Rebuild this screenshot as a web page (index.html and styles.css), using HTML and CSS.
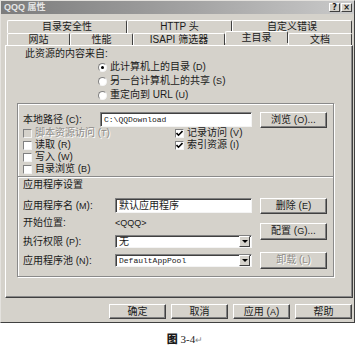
FILE: index.html
```
<!DOCTYPE html>
<html lang="zh-CN">
<head>
    <meta charset="UTF-8">
    <title>QQQ 属性</title>
    <link rel="stylesheet" href="styles.css">
</head>
<body>
    <div class="dialog">
        <div class="titlebar">
            <span class="title">QQQ 属性</span>
            <span class="title-buttons">
                <span class="tbtn">?</span>
                <span class="tbtn">×</span>
            </span>
        </div>

        <div class="tabs">
            <div class="tab-row">
                <div class="tab w120">目录安全性</div>
                <div class="tab w105">HTTP 头</div>
                <div class="tab w120">自定义错误</div>
            </div>
            <div class="tab-row">
                <div class="tab w63">网站</div>
                <div class="tab w63">性能</div>
                <div class="tab w92">ISAPI 筛选器</div>
                <div class="tab w63 active">主目录</div>
                <div class="tab w64">文档</div>
            </div>
        </div>

        <div class="panel">
            <div class="source-label">此资源的内容来自:</div>
            <div class="radio-list">
                <div class="radio-item"><span class="radio checked"></span><span>此计算机上的目录 (<u>D</u>)</span></div>
                <div class="radio-item"><span class="radio"></span><span>另一台计算机上的共享 (<u>S</u>)</span></div>
                <div class="radio-item"><span class="radio"></span><span>重定向到 URL (<u>U</u>)</span></div>
            </div>

            <div class="box">
                <div class="path-row">
                    <span class="path-label">本地路径 (<u>C</u>):</span>
                    <span class="field mono">C:\QQDownload</span>
                    <span class="btn">浏览 (<u>O</u>)...</span>
                </div>

                <div class="access">
                    <div class="access-col left">
                        <div class="check-item disabled"><span class="check"></span><span>脚本资源访问 (<u>T</u>)</span></div>
                        <div class="check-item"><span class="check"></span><span>读取 (<u>R</u>)</span></div>
                        <div class="check-item"><span class="check"></span><span>写入 (<u>W</u>)</span></div>
                        <div class="check-item"><span class="check"></span><span>目录浏览 (<u>B</u>)</span></div>
                    </div>
                    <div class="access-col">
                        <div class="check-item"><span class="check"><svg width="7" height="7" viewBox="0 0 7 7"><polyline points="0.5,3 2.5,5.2 6.5,1" fill="none" stroke="#000" stroke-width="1.6"/></svg></span><span>记录访问 (<u>V</u>)</span></div>
                        <div class="check-item"><span class="check"><svg width="7" height="7" viewBox="0 0 7 7"><polyline points="0.5,3 2.5,5.2 6.5,1" fill="none" stroke="#000" stroke-width="1.6"/></svg></span><span>索引资源 (<u>I</u>)</span></div>
                    </div>
                </div>

                <div class="divider"></div>
                <div class="section-label">应用程序设置</div>

                <div class="app-grid">
                    <span class="app-label">应用程序名 (<u>M</u>):</span>
                    <span class="field">默认应用程序</span>
                    <span class="btn">删除 (<u>E</u>)</span>

                    <span class="app-label">开始位置:</span>
                    <span class="plain">&lt;QQQ&gt;</span>
                    <span class="btn config">配置 (<u>G</u>)...</span>

                    <span class="app-label">执行权限 (<u>P</u>):</span>
                    <span class="field select">无<span class="drop"></span></span>

                    <span class="app-label">应用程序池 (<u>N</u>):</span>
                    <span class="field select mono">DefaultAppPool<span class="drop"></span></span>
                    <span class="btn disabled">卸载 (<u>L</u>)</span>
                </div>
            </div>
        </div>

        <div class="actions">
            <span class="btn wide">确定</span>
            <span class="btn wide">取消</span>
            <span class="btn wide">应用 (<u>A</u>)</span>
            <span class="btn wide">帮助</span>
        </div>
    </div>

    <div class="caption"><b>图</b> 3-4<span class="ret">↵</span></div>
</body>
</html>
```

FILE: styles.css
```
body {
    margin: 0;
    background-color: #fff;
    font-family: "Liberation Sans", "Noto Sans CJK SC", sans-serif;
    font-size: 10px;
    line-height: 12px;
    color: #1a1a1a;
}
u {
    text-decoration: none;
    font-size: 9px;
}
.dialog {
    width: 355px;
    height: 323px;
    box-sizing: border-box;
    background-color: #d5d2cb;
    border: 1px solid;
    border-color: #e4e2de #404040 #404040 #e4e2de;
}
.titlebar {
    height: 13px;
    display: flex;
    justify-content: space-between;
    align-items: center;
    background: linear-gradient(to right, #7c7c7c, #a4a4a4 55%, #cacaca);
    padding: 0 2px 0 3px;
}
.title {
    color: #e6e6e6;
    font-weight: bold;
    font-size: 9px;
    line-height: 13px;
}
.title-buttons {
    display: flex;
    gap: 1px;
}
.tbtn {
    width: 11px;
    height: 9px;
    box-sizing: border-box;
    background-color: #d5d2cb;
    border: 1px solid;
    border-color: #fff #404040 #404040 #fff;
    font-family: "DejaVu Sans", sans-serif;
    font-size: 8px;
    font-weight: bold;
    line-height: 7px;
    text-align: center;
}

/* вкладки */
.tabs {
    padding: 6px 0 0 6px;
}
.tab-row {
    display: flex;
}
.tab {
    height: 13px;
    box-sizing: border-box;
    border-top: 1px solid #fff;
    border-left: 1px solid #fff;
    border-right: 1px solid #404040;
    border-radius: 2px 2px 0 0;
    text-align: center;
    line-height: 12px;
}
.tab-row + .tab-row .tab {
    height: 12px;
    line-height: 11px;
}
.tab.active {
    position: relative;
    z-index: 1;
    height: 14px;
    margin-top: -2px;
    margin-bottom: -1px;
    background-color: #d5d2cb;
}
.w120 { width: 120px; }
.w105 { width: 105px; }
.w63 { width: 63px; }
.w64 { width: 64px; }
.w92 { width: 92px; }

/* основная панель */
.panel {
    margin-left: 4px;
    width: 348px;
    height: 253px;
    box-sizing: border-box;
    border: 1px solid;
    border-color: #fff #404040 #404040 #fff;
    box-shadow: inset -1px -1px #8a8a8a;
}
.source-label {
    margin: 1px 0 0 19px;
    height: 13px;
    line-height: 13px;
}
.radio-list {
    margin-left: 92px;
}
.radio-item {
    height: 14px;
    display: flex;
    align-items: center;
    gap: 3px;
}
.radio {
    width: 9px;
    height: 9px;
    box-sizing: border-box;
    border-radius: 50%;
    background-color: #fff;
    border: 1px solid;
    border-color: #808080 #f4f4f4 #f4f4f4 #808080;
    display: flex;
    align-items: center;
    justify-content: center;
}
.radio.checked::after {
    content: "";
    width: 3px;
    height: 3px;
    border-radius: 50%;
    background-color: #000;
}

.box {
    margin: 1px 0 0 11px;
    width: 317px;
    height: 174px;
    box-sizing: border-box;
    border: 1px solid #8a8a8a;
    box-shadow: 1px 1px #fff, inset 1px 1px #fff;
    padding: 8px 6px 0 5px;
}
.path-row {
    display: flex;
    align-items: center;
    height: 15px;
}
.path-label {
    width: 77px;
}
.path-row .field {
    width: 152px;
    height: 15px;
}
.path-row .btn {
    margin-left: 8px;
}
.field {
    height: 15px;
    box-sizing: border-box;
    background-color: #fff;
    border: 1px solid;
    border-color: #808080 #f4f4f4 #f4f4f4 #808080;
    box-shadow: inset 1px 1px #404040;
    padding-left: 3px;
    line-height: 13px;
    display: flex;
    align-items: center;
    position: relative;
}
.mono {
    font-family: "Liberation Mono", monospace;
    font-size: 8px;
}
.btn {
    width: 67px;
    height: 16px;
    box-sizing: border-box;
    border: 1px solid;
    border-color: #fff #404040 #404040 #fff;
    box-shadow: inset -1px -1px #808080;
    background-color: #d5d2cb;
    text-align: center;
    line-height: 14px;
}
.btn.disabled, .check-item.disabled {
    color: #8e8c88;
    text-shadow: 1px 1px #fff;
}

.access {
    display: flex;
}
.access-col.left {
    width: 152px;
}
.check-item {
    height: 12px;
    display: flex;
    align-items: center;
    gap: 3px;
}
.check {
    width: 9px;
    height: 9px;
    box-sizing: border-box;
    background-color: #fff;
    border: 1px solid;
    border-color: #808080 #f4f4f4 #f4f4f4 #808080;
    display: flex;
    align-items: center;
    justify-content: center;
}
.disabled .check {
    background-color: #d5d2cb;
}
.divider {
    margin: 1px -6px 0 -5px;
    border-top: 1px solid #8a8a8a;
    border-bottom: 1px solid #fff;
}
.section-label {
    height: 14px;
    line-height: 14px;
}
.app-grid {
    margin-top: 6px;
    display: grid;
    grid-template-columns: 92px 137px 67px;
    grid-template-rows: 15px 20px 17px 21px;
    column-gap: 0;
    align-items: center;
}
.app-grid .btn {
    margin-left: 8px;
    width: 67px;
}
.app-grid .btn.config {
    grid-column: 3;
    grid-row: 2 / 4;
    align-self: start;
    margin-top: 10px;
    height: 17px;
}
.app-grid .field {
    width: 137px;
}
.app-grid .select {
    height: 13px;
}
.app-grid .btn.disabled {
    grid-column: 3;
    height: 17px;
}
.app-label:nth-of-type(3) {
    grid-row: 3;
}
.plain {
    font-size: 9px;
}
.drop {
    position: absolute;
    right: 1px;
    top: 0;
    width: 11px;
    height: 11px;
    box-sizing: border-box;
    background-color: #d5d2cb;
    border: 1px solid;
    border-color: #fff #404040 #404040 #fff;
    display: flex;
    align-items: center;
    justify-content: center;
}
.drop::after {
    content: "";
    border-left: 3px solid transparent;
    border-right: 3px solid transparent;
    border-top: 3px solid #000;
}

/* нижние кнопки */
.actions {
    display: flex;
    justify-content: flex-end;
    gap: 5px;
    margin-top: 6px;
    padding-right: 2px;
}
.btn.wide {
    width: 57px;
    height: 15px;
}

.caption {
    margin-top: 9px;
    padding-left: 10px;
    text-align: center;
    font-family: "Liberation Serif", serif;
    font-size: 11px;
    line-height: 12px;
}
.caption b {
    font-family: "Noto Sans CJK SC", sans-serif;
    font-weight: 900;
}
.ret {
    color: #888;
    font-size: 9px;
}
```
